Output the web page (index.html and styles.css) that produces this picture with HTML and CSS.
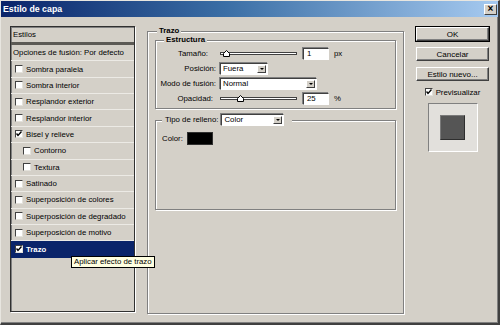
FILE: index.html
```html
<!DOCTYPE html>
<html lang="es">
<head>
    <meta charset="UTF-8">
    <title>Estilo de capa</title>
    <link rel="stylesheet" href="styles.css">
</head>
<body>

    <div class="window">
        <div class="titlebar">
            <span class="title">Estilo de capa</span>
            <span class="close">&#215;</span>
        </div>

        <div class="content">
            <!-- lista de estilos -->
            <div class="styles-list">
                <div class="list-head">Estilos</div>
                <div class="row">Opciones de fusión: Por defecto</div>
                <div class="row"><span class="check"></span>Sombra paralela</div>
                <div class="row"><span class="check"></span>Sombra interior</div>
                <div class="row"><span class="check"></span>Resplandor exterior</div>
                <div class="row"><span class="check"></span>Resplandor interior</div>
                <div class="row"><span class="check"><svg viewBox="0 0 6 6"><polyline points="0.5,2.5 2,4.5 5.5,0.5"/></svg></span>Bisel y relieve</div>
                <div class="row sub"><span class="check"></span>Contorno</div>
                <div class="row sub"><span class="check"></span>Textura</div>
                <div class="row"><span class="check"></span>Satinado</div>
                <div class="row"><span class="check"></span>Superposición de colores</div>
                <div class="row"><span class="check"></span>Superposición de degradado</div>
                <div class="row"><span class="check"></span>Superposición de motivo</div>
                <div class="row selected"><span class="check"><svg viewBox="0 0 6 6"><polyline points="0.5,2.5 2,4.5 5.5,0.5"/></svg></span>Trazo</div>
            </div>

            <!-- panel de trazo -->
            <fieldset class="group main">
                <legend>Trazo</legend>

                <fieldset class="group structure">
                    <legend>Estructura</legend>
                    <div class="form-grid">
                        <label class="lbl-size">Tamaño:</label>
                        <div class="control">
                            <svg class="slider" width="78" height="9">
                                <rect x="0.5" y="3.5" width="76" height="2" fill="#fff" stroke="#404040"/>
                                <polygon points="3.5,7.5 3.5,4.5 6.5,1.5 9.5,4.5 9.5,7.5" fill="#fff" stroke="#000"/>
                            </svg>
                            <span class="num">1</span>
                            <span class="unit">px</span>
                        </div>

                        <label>Posición:</label>
                        <div class="control">
                            <div class="select pos">Fuera<span class="arrow"></span></div>
                        </div>

                        <label>Modo de fusión:</label>
                        <div class="control">
                            <div class="select mode">Normal<span class="arrow"></span></div>
                        </div>

                        <label class="lbl-opacity">Opacidad:</label>
                        <div class="control">
                            <svg class="slider" width="78" height="9">
                                <rect x="0.5" y="3.5" width="76" height="2" fill="#fff" stroke="#404040"/>
                                <polygon points="17.5,7.5 17.5,4.5 20.5,1.5 23.5,4.5 23.5,7.5" fill="#fff" stroke="#000"/>
                            </svg>
                            <span class="num">25</span>
                            <span class="unit">%</span>
                        </div>
                    </div>
                </fieldset>

                <fieldset class="group fill">
                    <legend class="fill-legend">
                        <span>Tipo de relleno:</span>
                        <span class="select fill-type">Color<span class="arrow"></span></span>
                    </legend>
                    <div class="color-row">
                        <span>Color:</span>
                        <span class="swatch"></span>
                    </div>
                </fieldset>
            </fieldset>

            <!-- botones -->
            <div class="actions">
                <button class="default">OK</button>
                <button>Cancelar</button>
                <button>Estilo nuevo...</button>
                <div class="preview-check">
                    <span class="check"><svg viewBox="0 0 6 6"><polyline points="0.5,2.5 2,4.5 5.5,0.5"/></svg></span>
                    Previsualizar
                </div>
                <div class="preview">
                    <div class="preview-square"></div>
                </div>
            </div>
        </div>

        <div class="tooltip">Aplicar efecto de trazo</div>
    </div>

</body>
</html>
```

FILE: styles.css
```css
* {
    margin: 0;
    padding: 0;
    box-sizing: border-box;
}

body {
    background: #d4d0c8;
    font-family: "Liberation Sans", Arial, sans-serif;
    font-size: 7.8px;
    color: #000;
}

.window {
    position: relative;
    width: 500px;
    height: 325px;
    background: #d4d0c8;
    border-top: 1px solid #e8e6e0;
    border-left: 1px solid #e8e6e0;
    border-right: 2px solid #404040;
    border-bottom: 2px solid #404040;
    box-shadow: inset -1px -1px 0 #808080;
    overflow: hidden;
}

.titlebar {
    height: 16px;
    display: flex;
    align-items: center;
    justify-content: space-between;
    padding: 0 0 0 2px;
    background: linear-gradient(to right, #0a246a, #3a6ea5 45%, #a6caf0);
}

.title {
    color: #fff;
    font-weight: bold;
    font-size: 8.8px;
}

.close {
    width: 13px;
    height: 11px;
    margin-right: 1px;
    background: #d4d0c8;
    border: 1px solid;
    border-color: #fff #404040 #404040 #fff;
    font-size: 10px;
    font-weight: bold;
    line-height: 8px;
    text-align: center;
}

.content {
    display: flex;
    align-items: flex-start;
    padding: 9px 0 0 9px;
}

/* lista de estilos */
.styles-list {
    width: 125px;
    height: 286px;
    margin-right: 12px;
    border: 1px solid #303030;
    box-shadow: inset 1px 1px 0 #808080, 1px 1px 0 #fff;
}

.list-head {
    height: 18px;
    padding-left: 2px;
    line-height: 15px;
    border-bottom: 3px solid #5c5a55;
}

.row {
    height: 16.36px;
    display: flex;
    align-items: center;
    padding-left: 2px;
    border-bottom: 1px solid #eceae5;
    white-space: nowrap;
}

.row .check {
    margin: 0 3px 0 2px;
}

.row.sub .check {
    margin-left: 10px;
}

.row.selected {
    background: #0a246a;
    color: #fff;
    font-weight: bold;
    border-bottom: none;
}

.check {
    display: inline-flex;
    align-items: center;
    justify-content: center;
    width: 8px;
    height: 8px;
    background: #fff;
    border: 1px solid;
    border-color: #404040 #e4e2dc #e4e2dc #404040;
}

.check svg {
    width: 6px;
    height: 6px;
    fill: none;
    stroke: #000;
    stroke-width: 1.4;
}

/* grupos */
.group {
    border: 1px solid #808080;
    box-shadow: inset 1px 1px 0 #fff, 1px 1px 0 #fff;
    min-width: 0;
}

.group legend {
    font-weight: bold;
    line-height: 10px;
    padding: 0 2px;
    background: #d4d0c8;
}

.main {
    width: 257px;
    height: 288px;
    margin-right: 12px;
    padding: 0 7px;
}

.main > legend {
    margin-left: 2px;
}

.structure {
    margin-top: -1px;
    padding: 1px 0 2px 0;
}

.structure > legend {
    margin-left: 8px;
}

.form-grid {
    display: grid;
    grid-template-columns: 60px auto;
    grid-auto-rows: 15px;
    column-gap: 4px;
    align-items: center;
}

.form-grid label {
    text-align: right;
    white-space: nowrap;
}

.form-grid .lbl-size {
    padding-right: 8px;
}

.form-grid .lbl-opacity {
    padding-right: 3px;
}

.control {
    display: flex;
    align-items: center;
}

.slider {
    display: block;
    width: 78px;
    height: 9px;
}

.num {
    width: 26px;
    height: 12px;
    margin-left: 5px;
    padding-left: 3px;
    line-height: 10px;
    background: #fff;
    border: 1px solid;
    border-color: #404040 #fff #fff #404040;
    box-shadow: -1px -1px 0 #808080;
}

.unit {
    margin-left: 5px;
}

.select {
    position: relative;
    display: flex;
    align-items: center;
    height: 12px;
    padding-left: 2px;
    background: #fff;
    border: 1px solid;
    border-color: #404040 #fff #fff #404040;
    box-shadow: -1px -1px 0 #808080;
    font-weight: normal;
}

.select .arrow {
    position: absolute;
    right: 1px;
    top: 1px;
    width: 9px;
    height: 8px;
    background: #d4d0c8;
    border: 1px solid;
    border-color: #fff #404040 #404040 #fff;
}

.select .arrow::after {
    content: "";
    position: absolute;
    left: 2px;
    top: 2px;
    border-left: 2px solid transparent;
    border-right: 2px solid transparent;
    border-top: 2px solid #000;
}

.pos {
    width: 48px;
}

.mode {
    width: 97px;
}

.fill {
    height: 96px;
    margin-top: 5px;
    padding: 6px 6px 0 6px;
}

.fill > .fill-legend {
    display: flex;
    align-items: center;
    gap: 3px;
    height: 12px;
    padding: 0 8px 0 3px;
    font-weight: normal;
}

.fill-type {
    width: 63px;
}

.color-row {
    display: flex;
    align-items: center;
    gap: 4px;
}

.swatch {
    width: 26px;
    height: 13px;
    background: #000;
    border: 1px solid #303030;
}

/* botones */
.actions {
    width: 73px;
    display: flex;
    flex-direction: column;
    padding-top: 1px;
}

button {
    height: 14px;
    margin-bottom: 6px;
    font-family: "Liberation Sans", Arial, sans-serif;
    font-size: 8px;
    background: #d4d0c8;
    border: 1px solid;
    border-color: #fff #404040 #404040 #fff;
    box-shadow: inset -1px -1px 0 #808080;
}

button.default {
    outline: 1px solid #000;
    outline-offset: 0;
}

.preview-check {
    display: flex;
    align-items: center;
    justify-content: center;
    gap: 3px;
    height: 12px;
    margin-top: -1px;
}

.preview {
    width: 50px;
    height: 49px;
    margin: 5px auto 0;
    display: flex;
    align-items: center;
    justify-content: center;
    background: #e2e0dc;
    border: 1px solid;
    border-color: #808080 #fff #fff #808080;
}

.preview-square {
    width: 25px;
    height: 25px;
    background: #555;
    border: 1px solid;
    border-color: #7a7a7a #2e2e2e #2e2e2e #7a7a7a;
}

.tooltip {
    position: absolute;
    left: 70px;
    top: 255px;
    height: 12px;
    padding: 0 2px;
    line-height: 10px;
    background: #ffffe1;
    border: 1px solid #000;
    white-space: nowrap;
}
```
